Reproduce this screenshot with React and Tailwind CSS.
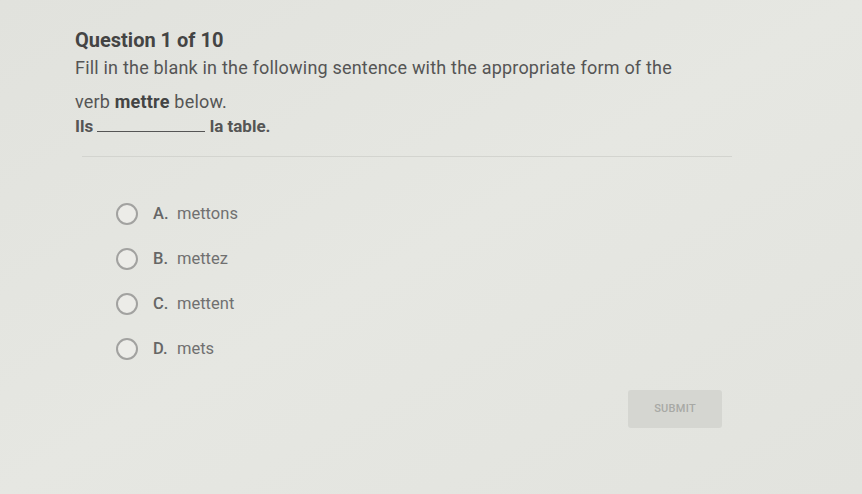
const options = [
  { letter: 'A.', text: 'mettons' },
  { letter: 'B.', text: 'mettez' },
  { letter: 'C.', text: 'mettent' },
  { letter: 'D.', text: 'mets' },
];

export default function App() {
  return (
    <div
      className="w-[862px] h-[494px] overflow-hidden bg-gradient-to-br from-[#e1e2dd] via-[#e6e7e2] to-[#e2e3de] text-[#3c3c3c]"
      style={{ fontFamily: 'Roboto, "Liberation Sans", sans-serif' }}
    >
      <div className="pl-[75px] pt-[26px]">
        <h1 className="text-[20px] font-bold leading-[28px] text-[#444]">Question 1 of 10</h1>
        <div className="-mt-[3px] text-[18px] leading-[34px] tracking-[0.2px] text-[#555]">
          <div>Fill in the blank in the following sentence with the appropriate form of the</div>
          <div>
            <span>verb </span>
            <span className="font-bold text-[#444]">mettre</span>
            <span> below.</span>
          </div>
        </div>
        <div className="text-[17px] font-bold leading-[14px] text-[#555]">
          <span>Ils </span>
          <span className="inline-block w-[108px] border-b border-[#555] align-baseline"></span>
          <span> la table.</span>
        </div>
      </div>
      <div className="ml-[82px] mt-[23px] w-[650px] border-t border-[#d3d4cf]"></div>
      <div className="ml-[116px] mt-[46px] flex flex-col gap-[23px]">
        {options.map((o) => (
          <label key={o.letter} className="flex items-center text-[16.5px] leading-[22px] text-[#707070]">
            <span className="h-[22px] w-[22px] rounded-full border-2 border-[#a2a2a0] bg-[#ecece8]"></span>
            <span className="ml-[15px] w-[24px] font-medium text-[#666]">{o.letter}</span>
            <span>{o.text}</span>
          </label>
        ))}
      </div>
      <div className="ml-[628px] mt-[30px]">
        <button className="h-[38px] w-[94px] rounded-[3px] bg-[#d5d6d1] text-[11px] font-medium tracking-wide text-[#a8a9a5]">
          SUBMIT
        </button>
      </div>
    </div>
  );
}
